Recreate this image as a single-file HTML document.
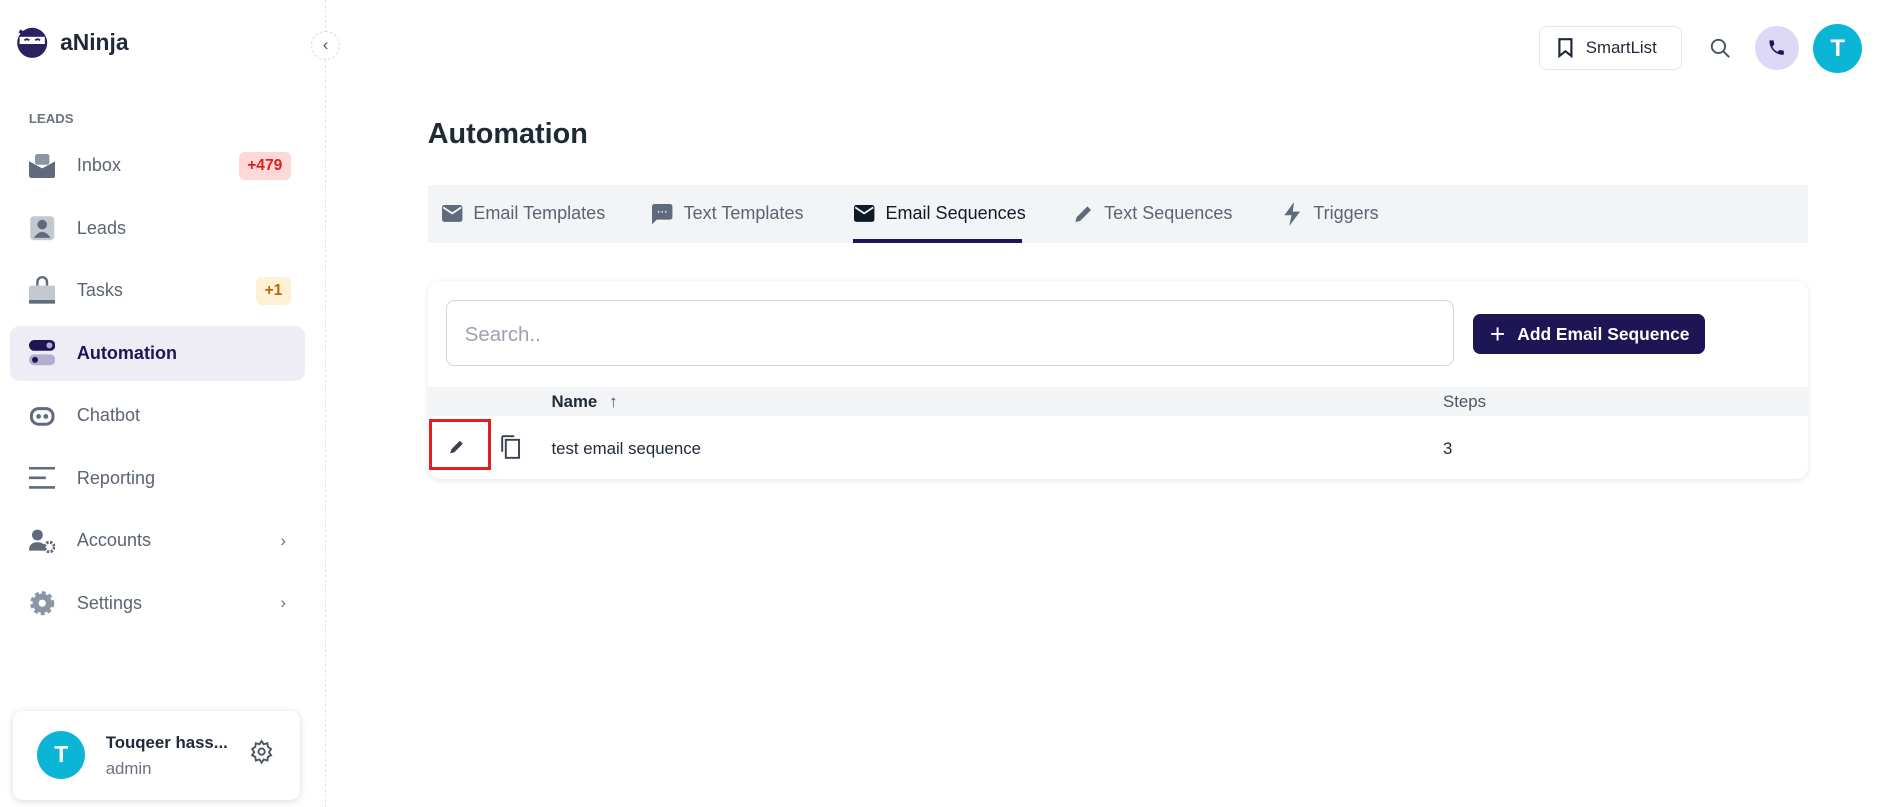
<!DOCTYPE html>
<html><head><meta charset="utf-8"><style>
*{box-sizing:border-box;margin:0;padding:0}
html,body{width:1884px;height:807px;overflow:hidden;background:#fff}
#w{zoom:1.2015;width:1568px;height:672px;position:relative;font-family:"Liberation Sans",sans-serif;color:#1f2937}
.a{position:absolute}
.side{left:0;top:0;width:271px;height:672px;border-right:1px dashed #e1e3e8}
.mi{position:absolute;left:8px;width:246px;height:46px;display:flex;align-items:center;font-size:15px;color:#5b6475}
.mi svg{position:absolute;left:16px}
.mi span.t{position:absolute;left:56px}
.badge{position:absolute;right:12px;height:23px;border-radius:5px;font-size:13px;font-weight:bold;display:flex;align-items:center;padding:0 7px}
.chev{position:absolute;right:16px;color:#6b7280;font-size:14px}
.tab{position:absolute;top:154px;height:48px;display:flex;align-items:center;font-size:15px;color:#5b6475}
.tab svg{margin-right:9px}
</style></head><body><div id="w">
<div class="a side">
 <svg class="a" style="left:13px;top:22px" width="27" height="27" viewBox="0 0 27 27"><circle cx="13.5" cy="14" r="12.5" fill="#2b2060"/><rect x="3" y="9" width="21" height="6" fill="#fff"/><path d="M7 12q2-2 4 0M16 12q2-2 4 0" stroke="#2b2060" stroke-width="1.5" fill="none"/><path d="M3 4l4 3" stroke="#2b2060" stroke-width="3"/></svg>
 <div class="a" style="left:50px;top:24px;font-size:19px;font-weight:bold;color:#1f2937">aNinja</div>
 <div class="a" style="left:24px;top:92px;font-size:11px;font-weight:bold;color:#6b7280">LEADS</div>
 <div class="mi" style="top:115px"><svg width="22" height="20" viewBox="0 0 22 20"><rect x="5" y="0" width="12" height="9" rx="2" fill="#8a95a5"/><path d="M0 6l11 6 11-6v12a2 2 0 0 1-2 2H2a2 2 0 0 1-2-2z" fill="#5f6b7c"/></svg><span class="t">Inbox</span><span class="badge" style="background:#fdd8d8;color:#e0201b">+479</span></div>
 <div class="mi" style="top:167px"><svg width="22" height="22" viewBox="0 0 22 22"><rect x="1" y="1" width="20" height="20" rx="3" fill="#c4c9d1"/><circle cx="11" cy="8" r="4" fill="#5f6b7c"/><path d="M4 19q7-10 14 0z" fill="#5f6b7c"/></svg><span class="t">Leads</span></div>
 <div class="mi" style="top:219px"><svg width="22" height="24" viewBox="0 0 22 24"><path d="M7 8V5a4 4 0 0 1 8 0v3" stroke="#5f6b7c" stroke-width="2" fill="none"/><rect x="0" y="8" width="22" height="15" rx="2" fill="#c4c9d1"/><rect x="0" y="20" width="22" height="3" fill="#5f6b7c"/></svg><span class="t">Tasks</span><span class="badge" style="background:#fdf0d5;color:#b46b00">+1</span></div>
 <div class="mi" style="top:271px;background:#eeedf5;border-radius:8px;color:#1e1654;font-weight:bold"><svg width="22" height="22" viewBox="0 0 22 22"><rect x="0" y="0" width="22" height="9" rx="4.5" fill="#1e1654"/><circle cx="17" cy="4.5" r="2.5" fill="#b3aed0"/><rect x="0" y="12" width="22" height="9" rx="4.5" fill="#b3aed0"/><circle cx="5" cy="16.5" r="2.5" fill="#1e1654"/></svg><span class="t">Automation</span></div>
 <div class="mi" style="top:323px"><svg width="22" height="18" viewBox="0 0 22 18"><rect x="2" y="3" width="18" height="13" rx="6" fill="none" stroke="#5f6b7c" stroke-width="2.5"/><circle cx="8" cy="9.5" r="2" fill="#5f6b7c"/><circle cx="14" cy="9.5" r="2" fill="#5f6b7c"/></svg><span class="t">Chatbot</span></div>
 <div class="mi" style="top:375px"><svg width="22" height="18" viewBox="0 0 22 18"><path d="M0 1h22M0 9h14M0 17h22" stroke="#5f6b7c" stroke-width="2.2"/></svg><span class="t">Reporting</span></div>
 <div class="mi" style="top:427px"><svg width="22" height="20" viewBox="0 0 22 20"><circle cx="7" cy="5" r="4.5" fill="#5f6b7c"/><path d="M0 18q0-7 7-7t7 7z" fill="#5f6b7c"/><circle cx="17" cy="15" r="4" fill="none" stroke="#5f6b7c" stroke-width="2.5" stroke-dasharray="2 1.2"/></svg><span class="t">Accounts</span><span class="chev">›</span></div>
 <div class="mi" style="top:479px"><svg width="22" height="22" viewBox="0 0 22 22"><circle cx="11" cy="11" r="8" fill="#8a95a5" stroke="#8a95a5" stroke-width="4" stroke-dasharray="3 2.3"/><circle cx="11" cy="11" r="3" fill="#fff"/></svg><span class="t">Settings</span><span class="chev">›</span></div>
 <div class="a" style="left:11px;top:592px;width:239px;height:74px;border-radius:8px;background:#fff;box-shadow:0 1px 6px rgba(0,0,0,.15)">
  <div class="a" style="left:20px;top:16px;width:40px;height:40px;border-radius:50%;background:#0bb5d6;color:#fff;font-size:19px;font-weight:bold;display:flex;align-items:center;justify-content:center">T</div>
  <div class="a" style="left:77px;top:18px;font-size:14px;font-weight:bold">Touqeer hass...</div>
  <div class="a" style="left:77px;top:40px;font-size:14px;color:#6b7280">admin</div>
  <svg class="a" style="left:196px;top:23px" width="21" height="21" viewBox="0 0 24 24" fill="none" stroke="#4b5563" stroke-width="1.8"><circle cx="12" cy="12" r="3"/><path d="M12 2l2 3 3.5-1 .5 3.5 3 2-2 3 2 3-3 1.5-.5 3.5-3.5-1-2 3-2-3-3.5 1-.5-3.5-3-1.5 2-3-2-3 3-2 .5-3.5 3.5 1z"/></svg>
 </div>
</div>
<div class="a" style="left:259px;top:26px;width:24px;height:24px;border-radius:50%;border:1px dashed #d9dce1;background:#fff;text-align:center;font-size:14px;line-height:21px;color:#4b5563">‹</div>
<div class="a" style="left:1281px;top:22px;width:119px;height:36px;border:1px solid #e5e7eb;border-radius:6px;display:flex;align-items:center;font-size:14px;color:#1f2937"><svg style="margin:0 10px 0 14px" width="14" height="16" viewBox="0 0 14 16"><path d="M2 1h10v14l-5-4-5 4z" fill="none" stroke="#1f2937" stroke-width="1.8"/></svg>SmartList</div>
<svg class="a" style="left:1423px;top:32px" width="17" height="17" viewBox="0 0 17 17"><circle cx="7" cy="7" r="5.5" fill="none" stroke="#4b5563" stroke-width="1.6"/><path d="M11 11l5 5" stroke="#4b5563" stroke-width="1.6"/></svg>
<div class="a" style="left:1461px;top:22px;width:36px;height:36px;border-radius:50%;background:#dcd8f5"><svg style="margin:10px" width="16" height="16" viewBox="0 0 24 24"><path d="M6.6 10.8a15 15 0 0 0 6.6 6.6l2.2-2.2c.3-.3.7-.4 1-.2 1.1.4 2.3.6 3.6.6.6 0 1 .4 1 1V20c0 .6-.4 1-1 1A17 17 0 0 1 3 4c0-.6.4-1 1-1h3.5c.6 0 1 .4 1 1 0 1.3.2 2.5.6 3.6.1.3 0 .7-.2 1z" fill="#1e1654"/></svg></div>
<div class="a" style="left:1509px;top:20px;width:41px;height:41px;border-radius:50%;background:#0bb5d6;color:#fff;font-size:20px;font-weight:bold;display:flex;align-items:center;justify-content:center">T</div>
<div class="a" style="left:356px;top:98px;font-size:24px;font-weight:bold;color:#1f2937">Automation</div>
<div class="a" style="left:356px;top:154px;width:1149px;height:48px;background:#f3f4f6"></div>
<div class="tab" style="left:368px"><svg width="17" height="14" viewBox="0 0 17 14"><rect width="17" height="14" rx="2" fill="#5f6b7c"/><path d="M1 2l7.5 5L16 2" stroke="#f3f4f6" stroke-width="1.5" fill="none"/></svg>Email Templates</div>
<div class="tab" style="left:543px"><svg width="17" height="17" viewBox="0 0 17 17"><path d="M0 2a2 2 0 0 1 2-2h13a2 2 0 0 1 2 2v9a2 2 0 0 1-2 2H4l-4 4z" fill="#5f6b7c"/><path d="M5 6.5h1M8 6.5h1M11 6.5h1" stroke="#f3f4f6" stroke-width="1.5"/></svg>Text Templates</div>
<div class="tab" style="left:711px;color:#111827"><svg width="17" height="14" viewBox="0 0 17 14"><rect width="17" height="14" rx="2" fill="#111827"/><path d="M1 2l7.5 5L16 2" stroke="#f3f4f6" stroke-width="1.5" fill="none"/></svg>Email Sequences</div>
<div class="a" style="left:710px;top:199px;width:141px;height:3px;background:#1e1654"></div>
<div class="tab" style="left:893px"><svg width="17" height="17" viewBox="0 0 17 17"><path d="M2 15l1-4 9-9 3 3-9 9z" fill="#5f6b7c"/></svg>Text Sequences</div>
<div class="tab" style="left:1067px"><svg width="17" height="20" viewBox="0 0 17 20"><path d="M10 0L2 11h6l-2 9 9-12H9z" fill="#5f6b7c"/></svg>Triggers</div>
<div class="a" style="left:356px;top:234px;width:1149px;height:165px;border-radius:10px;background:#fff;box-shadow:0 1px 5px rgba(0,0,0,.1);overflow:hidden">
 <div class="a" style="left:15px;top:16px;width:839px;height:55px;border:1px solid #d1d5db;border-radius:7px;font-size:17px;color:#9ca3af;padding:19px 0 0 15px">Search..</div>
 <div class="a" style="left:870px;top:27px;width:193px;height:34px;border-radius:6px;background:#1e1654;color:#fff;font-size:14.5px;font-weight:bold;display:flex;align-items:center;padding-left:14px"><span style="font-size:22px;font-weight:normal;margin-right:10px;line-height:1">+</span>Add Email Sequence</div>
 <div class="a" style="left:0;top:88px;width:1149px;height:24px;background:#f3f4f6"></div>
 <div class="a" style="left:103px;top:92px;font-size:14px;font-weight:bold">Name <span style="font-weight:normal;color:#4b5563;margin-left:6px">↑</span></div>
 <div class="a" style="left:845px;top:92px;font-size:14px;color:#4b5563">Steps</div>
 <div class="a" style="left:1px;top:115px;width:52px;height:42px;border:3px solid #e02020"></div>
 <svg class="a" style="left:18px;top:131px" width="13" height="13" viewBox="0 0 13 13"><path d="M1 12l1-3.5 7-7 2.5 2.5-7 7z" fill="#374151"/></svg>
 <svg class="a" style="left:61px;top:128px" width="17" height="20" viewBox="0 0 17 20"><path d="M4 4h11v15H4z M1 1h10" fill="none" stroke="#374151" stroke-width="1.6"/><path d="M1 1v13" stroke="#374151" stroke-width="1.6"/></svg>
 <div class="a" style="left:103px;top:131px;font-size:14px">test email sequence</div>
 <div class="a" style="left:845px;top:131px;font-size:14px">3</div>
</div>
</div></body></html>
